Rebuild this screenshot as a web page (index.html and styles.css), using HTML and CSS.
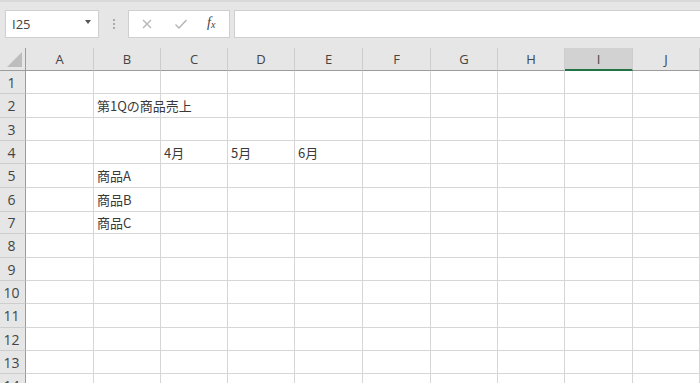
FILE: index.html
```html
<!DOCTYPE html>
<html lang="ja">
<head>
    <meta charset="UTF-8">
    <meta name="viewport" content="width=device-width, initial-scale=1.0">
    <title>Book1 - Excel</title>
    <link rel="stylesheet" href="styles.css">
</head>
<body>
    <div class="toolbar">
        <div class="name-box">
            <span class="name-value">I25</span>
            <span class="name-arrow"></span>
        </div>
        <div class="grip">
            <span></span><span></span><span></span>
        </div>
        <div class="fx-buttons">
            <svg class="fx-icon" width="12" height="12" viewBox="0 0 12 12">
                <path d="M2 2 L10 10 M10 2 L2 10" stroke="#b4b4b4" stroke-width="1.3" fill="none"/>
            </svg>
            <svg class="fx-icon" width="14" height="12" viewBox="0 0 14 12">
                <path d="M1.5 6.5 L5 10 L12.5 2" stroke="#b4b4b4" stroke-width="1.4" fill="none"/>
            </svg>
            <span class="fx-label">f<span class="fx-x">x</span></span>
        </div>
        <div class="formula-input"></div>
    </div>

    <div class="sheet" id="sheet"></div>

    <script>
        const columns = ['A', 'B', 'C', 'D', 'E', 'F', 'G', 'H', 'I', 'J'];
        const widths = [68, 67, 67, 67, 68, 68, 67, 67, 68, 67];
        const heights = [23, 24, 23, 23, 24, 24, 22, 24, 23, 23, 24, 23, 23, 23];
        const selectedCol = 'I';

        // cell contents by "row:col"
        const data = {
            '2:B': '第1Qの商品売上',
            '4:C': '4月',
            '4:D': '5月',
            '4:E': '6月',
            '5:B': '商品A',
            '6:B': '商品B',
            '7:B': '商品C'
        };

        const sheet = document.getElementById('sheet');
        sheet.style.gridTemplateColumns = '26px ' + widths.map(w => w + 'px').join(' ');
        sheet.style.gridTemplateRows = '23px ' + heights.map(h => h + 'px').join(' ');

        const corner = document.createElement('div');
        corner.className = 'corner';
        corner.innerHTML = '<span class="corner-tri"></span>';
        sheet.appendChild(corner);

        columns.forEach(col => {
            const head = document.createElement('div');
            head.className = 'col-head' + (col === selectedCol ? ' selected' : '');
            head.textContent = col;
            sheet.appendChild(head);
        });

        heights.forEach((h, i) => {
            const row = i + 1;
            const rowHead = document.createElement('div');
            rowHead.className = 'row-head';
            rowHead.textContent = row;
            sheet.appendChild(rowHead);

            columns.forEach(col => {
                const cell = document.createElement('div');
                cell.className = 'cell';
                cell.textContent = data[row + ':' + col] || '';
                sheet.appendChild(cell);
            });
        });
    </script>
</body>
</html>
```

FILE: styles.css
```css
* {
    box-sizing: border-box;
}

body {
    margin: 0;
    width: 700px;
    height: 383px;
    overflow: hidden;
    background-color: #ffffff;
    font-family: "Noto Sans CJK JP", "Noto Sans", sans-serif;
    color: #333;
}

.toolbar {
    height: 48px;
    background-color: #e6e6e6;
    border-top: 2px solid #dadada;
    display: flex;
    align-items: flex-start;
    padding: 8px 0 0 5px;
}

.name-box {
    width: 94px;
    height: 28px;
    background: #fff;
    border: 1px solid #cfcfcf;
    display: flex;
    align-items: center;
    justify-content: space-between;
    padding: 0 7px 0 6px;
}

.name-value {
    font-family: "Open Sans", "Noto Sans", sans-serif;
    font-size: 13px;
    color: #444;
}

.name-arrow {
    width: 0;
    height: 0;
    border-left: 3.5px solid transparent;
    border-right: 3.5px solid transparent;
    border-top: 4px solid #555;
    margin-top: -4px;
}

.grip {
    width: 29px;
    height: 28px;
    display: flex;
    flex-direction: column;
    align-items: center;
    justify-content: center;
    gap: 2px;
}

.grip span {
    width: 2px;
    height: 2px;
    background: #aaa;
}

.fx-buttons {
    width: 102px;
    height: 28px;
    background: #fff;
    border: 1px solid #cfcfcf;
    display: flex;
    align-items: center;
    padding-left: 12px;
}

.fx-icon {
    margin-right: 21px;
}

.fx-icon + .fx-icon {
    margin-right: 19px;
}

.fx-label {
    font-family: "Liberation Serif", serif;
    font-style: italic;
    font-size: 14px;
    color: #444;
    margin-top: -2px;
}

.fx-x {
    font-size: 10px;
    position: relative;
    top: 1px;
}

.formula-input {
    margin-left: 4px;
    flex: 1;
    height: 28px;
    background: #fff;
    border: 1px solid #cfcfcf;
    border-right: none;
}

.sheet {
    display: grid;
}

.corner {
    background: #e6e6e6;
    border-right: 1px solid #9c9c9c;
    border-bottom: 1px solid #9c9c9c;
    position: relative;
}

.corner-tri {
    position: absolute;
    right: 3px;
    bottom: 3px;
    width: 0;
    height: 0;
    border-left: 15px solid transparent;
    border-bottom: 15px solid #bdbdbd;
}

.col-head {
    background: #e6e6e6;
    border-right: 1px solid #cdcdcd;
    border-bottom: 1px solid #9c9c9c;
    font-family: "Open Sans", "Noto Sans", sans-serif;
    font-size: 13px;
    color: #444;
    display: flex;
    align-items: center;
    justify-content: center;
}

.col-head.selected {
    background: #d2d2d2;
    border-bottom: 2px solid #217346;
}

.row-head {
    background: #e6e6e6;
    border-right: 1px solid #9c9c9c;
    border-bottom: 1px solid #cdcdcd;
    font-family: "Open Sans", "Noto Sans", sans-serif;
    font-size: 14px;
    color: #444;
    display: flex;
    align-items: center;
    justify-content: center;
    padding-right: 2px;
}

.cell {
    border-right: 1px solid #d6d6d6;
    border-bottom: 1px solid #d6d6d6;
    font-size: 13px;
    color: #3a3a3a;
    padding: 0 0 0 3px;
    display: flex;
    align-items: center;
    white-space: nowrap;
}
```
